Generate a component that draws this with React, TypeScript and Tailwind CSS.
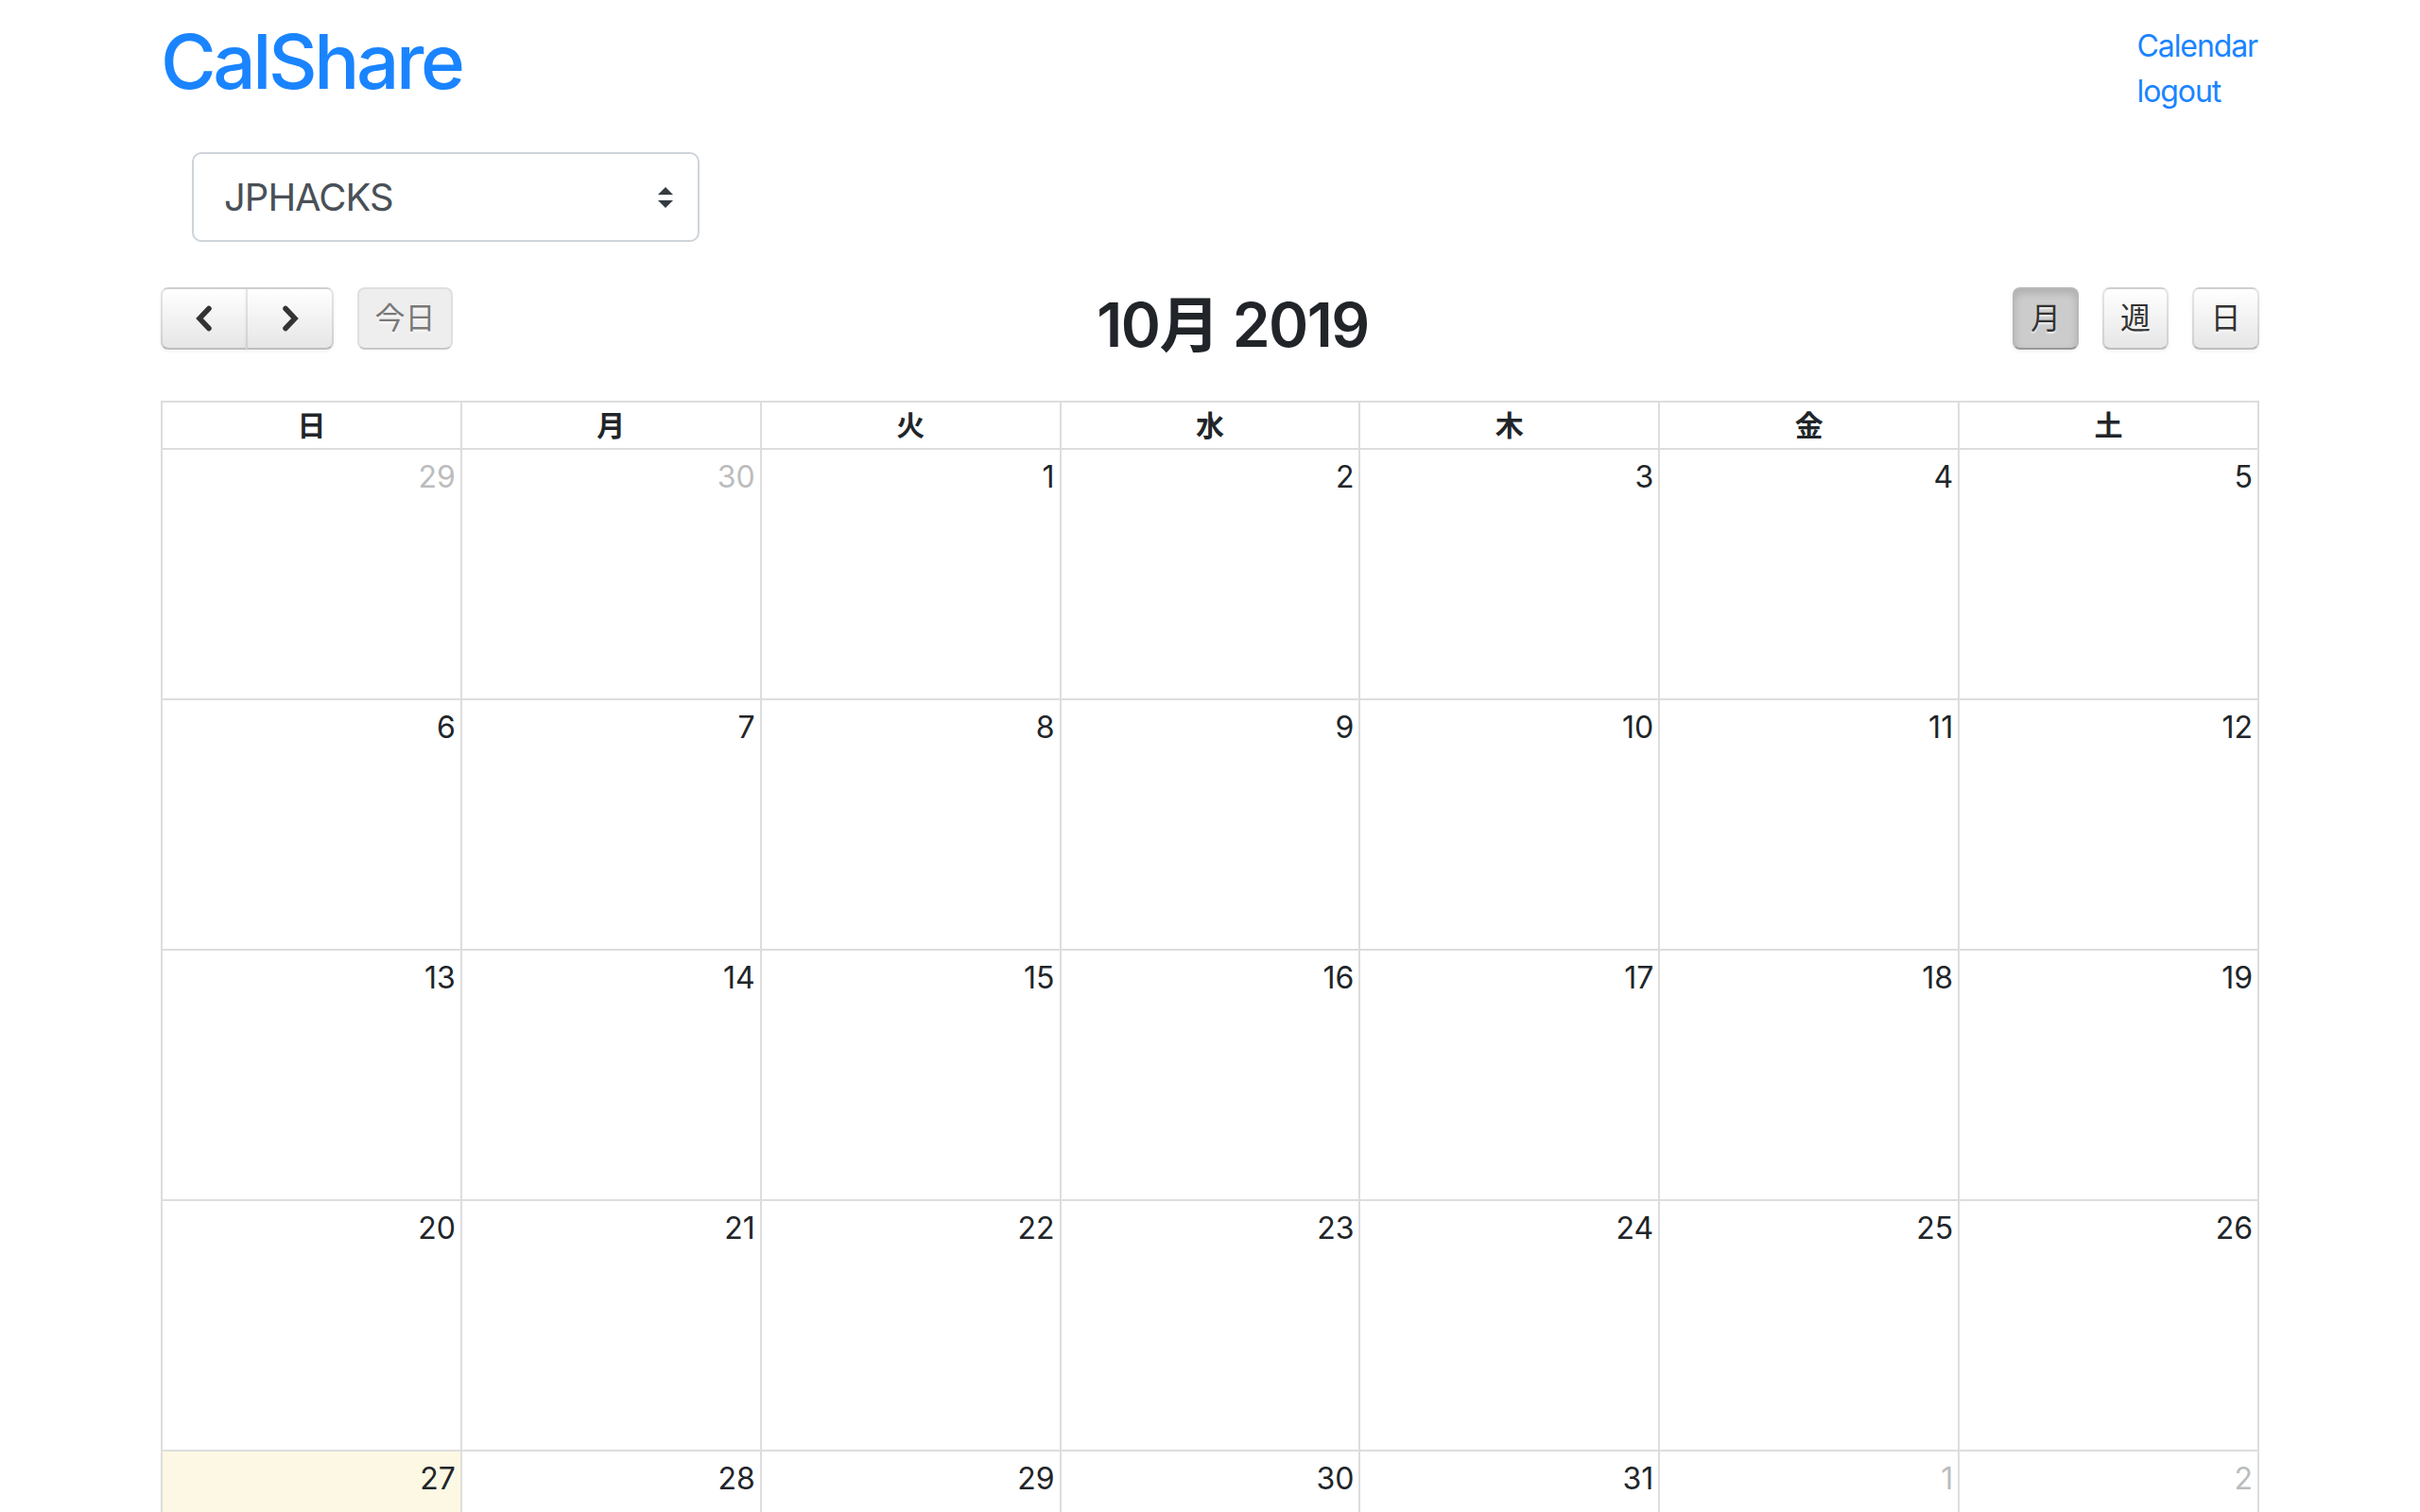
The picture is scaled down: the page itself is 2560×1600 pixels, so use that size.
import React from "react";

const FONT = { fontFamily: 'Inter, "Noto Sans CJK JP", sans-serif' };

const WEEKDAYS = ["日", "月", "火", "水", "木", "金", "土"];

// 6 weeks starting Sunday Sep 29, 2019
const days = Array.from({ length: 42 }, (_, i) => {
  const d = new Date(2019, 8, 29 + i);
  return {
    key: i,
    date: d.getDate(),
    inMonth: d.getMonth() === 9,
    today: d.getMonth() === 9 && d.getDate() === 27,
  };
});

const weeks = Array.from({ length: 6 }, (_, w) => days.slice(w * 7, w * 7 + 7));

const btnBase =
  "h-[66px] flex items-center justify-center border-2 text-[32px] text-[#333] [text-shadow:0_2px_2px_rgba(255,255,255,0.75)]";
const btnDefault =
  "bg-[#f5f5f5] bg-linear-to-b from-white to-[#e6e6e6] border-black/10 border-b-black/25 shadow-[inset_0_2px_0_rgba(255,255,255,0.2),0_2px_4px_rgba(0,0,0,0.05)]";
const btnActive =
  "bg-[#ccc] border-black/10 border-b-black/25 shadow-[inset_0_4px_8px_rgba(0,0,0,0.15),0_2px_4px_rgba(0,0,0,0.05)]";

const Chevron = ({ dir }: { dir: "left" | "right" }) => (
  <svg width="20" height="28" viewBox="0 0 20 28">
    <polyline
      points={dir === "left" ? "15,3.5 5,14 15,24.5" : "5,3.5 15,14 5,24.5"}
      fill="none"
      stroke="#333"
      strokeWidth="5.5"
      strokeLinecap="round"
      strokeLinejoin="miter"
    />
  </svg>
);

const App = () => {
  return (
    <div className="min-h-screen bg-white text-[#212529]" style={FONT}>
      <div className="w-[2220px] mx-auto">
        {/* Header */}
        <div className="flex justify-between items-start h-[121px]">
          <h1 className="pt-[17px] text-[80px] leading-[96px] font-medium tracking-[-3.4px] text-[#1a84ff]">
            CalShare
          </h1>
          <div className="pt-[25px] pr-[2px] flex flex-col text-[32px] leading-[48px] tracking-[-1.1px] text-[#1a84ff]">
            <a href="#">Calendar</a>
            <a href="#">logout</a>
          </div>
        </div>

        {/* Group select */}
        <div className="mt-[40px] ml-[33px] w-[537px] h-[95px] rounded-[10px] border-2 border-[#ced4da] flex items-center justify-between pl-[32px] pr-[26px]">
          <span className="text-[40px] text-[#495057] tracking-[-1px]">JPHACKS</span>
          <svg width="16" height="22" viewBox="0 0 8 11">
            <path d="M4 0L0 4h8z M4 11L0 7h8z" fill="#343a40" />
          </svg>
        </div>

        {/* Toolbar */}
        <div className="mt-[48px] flex items-start h-[66px]">
          <div className="flex items-center">
            <div className="flex">
              <button className={`${btnBase} ${btnDefault} w-[92px] rounded-l-[8px]`}>
                <Chevron dir="left" />
              </button>
              <button className={`${btnBase} ${btnDefault} w-[93px] -ml-[2px] rounded-r-[8px]`}>
                <Chevron dir="right" />
              </button>
            </div>
            <button className={`${btnBase} ml-[25px] w-[101px] rounded-[8px] bg-[#e6e6e6] border-black/10 border-b-black/25 opacity-65`}>
              今日
            </button>
          </div>
          <div className="flex-1 flex justify-center">
            <h2 className="mt-[8px] text-[64px] leading-[64px] font-semibold tracking-[-1.5px] text-[#212529]">
              10月 2019
            </h2>
          </div>
          <div className="flex gap-[25px]">
            <button className={`${btnBase} ${btnActive} w-[70px] rounded-[8px]`}>月</button>
            <button className={`${btnBase} ${btnDefault} w-[70px] rounded-[8px]`}>週</button>
            <button className={`${btnBase} ${btnDefault} w-[71px] rounded-[8px]`}>日</button>
          </div>
        </div>

        {/* Calendar grid */}
        <div className="mt-[54px] border-l-2 border-t-2 border-[#ddd]">
          <div className="grid grid-cols-7">
            {WEEKDAYS.map((w) => (
              <div
                key={w}
                className="h-[50px] border-r-2 border-b-2 border-[#ddd] flex items-center justify-center text-[30px] font-bold text-[#212529]"
              >
                {w}
              </div>
            ))}
          </div>
          {weeks.map((week, wi) => (
            <div key={wi} className="grid grid-cols-7">
              {week.map((d) => (
                <div
                  key={d.key}
                  className={`h-[265px] border-r-2 border-b-2 border-[#ddd] flex justify-end items-start pt-[5px] pr-[5px] ${
                    d.today ? "bg-[#fcf8e3]" : ""
                  }`}
                >
                  <span
                    className={`text-[32px] leading-[48px] ${
                      d.inMonth ? "text-[#212529]" : "text-[#212529] opacity-30"
                    }`}
                  >
                    {d.date}
                  </span>
                </div>
              ))}
            </div>
          ))}
        </div>
      </div>
    </div>
  );
};

export default App;
